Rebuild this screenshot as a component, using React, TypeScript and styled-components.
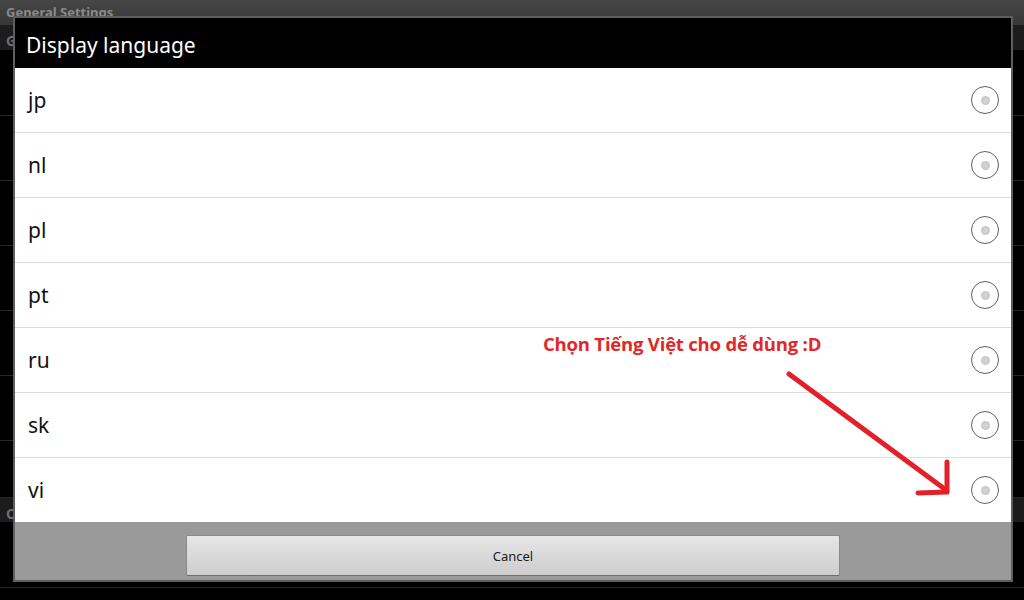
import React from "react";
import styled, { createGlobalStyle } from "styled-components";

const Global = createGlobalStyle`
  html, body { margin: 0; padding: 0; background: #000; }
  body { font-family: "Noto Sans", "Open Sans", sans-serif; }
  * { box-sizing: border-box; }
`;

const Page = styled.div`
  position: relative;
  width: 1024px;
  height: 600px;
  overflow: hidden;
  background: #000;
  display: flex;
  flex-direction: column;
`;

const TopBar = styled.div`
  height: 25px;
  flex: none;
  background: linear-gradient(#474747, #363636);
  color: #8a8a8a;
  font: bold 13px "Noto Sans", sans-serif;
  padding: 3px 0 0 6px;
`;

const SubHead = styled.div<{ $h: number }>`
  height: ${(p) => p.$h}px;
  flex: none;
  background: #1c1c1c;
  color: #6e6e6e;
  font: bold 14px "Noto Sans", sans-serif;
  padding: 6px 0 0 6px;
`;

const BgRow = styled.div<{ $h: number }>`
  height: ${(p) => p.$h}px;
  flex: none;
  border-bottom: 1px solid #262626;
  color: #7a7a7a;
  font: 13px "Noto Sans", sans-serif;
  padding: 2px 0 0 16px;
`;

const Dialog = styled.div`
  position: absolute;
  top: 16px;
  left: 13px;
  width: 1000px;
  height: 566px;
  border: 2px solid #5e5e5e;
  display: flex;
  flex-direction: column;
  background: #000;
`;

const TitleBar = styled.div`
  height: 50px;
  flex: none;
  background: #000;
  color: #fff;
  font: 21px "Noto Sans", "Open Sans", sans-serif;
  padding: 4px 0 0 11px;
  display: flex;
  align-items: center;
`;

const List = styled.div`
  flex: none;
  height: 454px;
  background: #fff;
  display: flex;
  flex-direction: column;
`;

const Row = styled.div<{ $last?: boolean }>`
  height: ${(p) => (p.$last ? 64 : 65)}px;
  flex: none;
  display: flex;
  align-items: center;
  justify-content: space-between;
  padding: 0 12px 0 13px;
  border-bottom: ${(p) => (p.$last ? "none" : "1px solid #dcdcdc")};
  color: #111;
  font: 21px "Noto Sans", "Open Sans", sans-serif;
`;

const Radio = styled.span`
  width: 28px;
  height: 28px;
  border-radius: 50%;
  border: 1.8px solid #606060;
  display: flex;
  align-items: center;
  justify-content: center;
  &::after {
    content: "";
    width: 9px;
    height: 9px;
    border-radius: 50%;
    background: radial-gradient(#d6d6d6, #c2c2c2);
  }
`;

const Footer = styled.div`
  flex: 1;
  background: #9a9a9a;
  display: flex;
  justify-content: center;
  padding-top: 13px;
`;

const Button = styled.div`
  width: 654px;
  height: 41px;
  background: linear-gradient(#e6e6e6, #cdcdcd);
  border: 1px solid #8a8a8a;
  border-bottom-color: #6e6e6e;
  border-radius: 2px;
  display: flex;
  align-items: center;
  justify-content: center;
  color: #1a1a1a;
  font: 13px "Noto Sans", "Open Sans", sans-serif;
`;

const Note = styled.div`
  position: absolute;
  left: 543px;
  top: 331px;
  color: #e02828;
  font: bold 18.5px "Open Sans", "Liberation Sans", sans-serif;
  letter-spacing: -0.2px;
  white-space: nowrap;
`;

const Overlay = styled.svg`
  position: absolute;
  left: 0;
  top: 0;
  pointer-events: none;
`;

const langs = ["jp", "nl", "pl", "pt", "ru", "sk", "vi"];

export default function App() {
  return (
    <>
      <Global />
      <Page>
        <TopBar>General Settings</TopBar>
        <SubHead $h={25}>Global app settings</SubHead>
        <BgRow $h={66} />
        <BgRow $h={65} />
        <BgRow $h={65} />
        <BgRow $h={65} />
        <BgRow $h={65} />
        <BgRow $h={65} />
        <BgRow $h={57} />
        <SubHead $h={24}>OpenSubtitles</SubHead>
        <BgRow $h={66}>Needed for OpenSubtitles.org translations</BgRow>
        <Dialog>
          <TitleBar>Display language</TitleBar>
          <List>
            {langs.map((l, i) => (
              <Row key={l} $last={i === langs.length - 1}>
                <span>{l}</span>
                <Radio />
              </Row>
            ))}
          </List>
          <Footer>
            <Button>Cancel</Button>
          </Footer>
        </Dialog>
        <Note>Chọn Tiếng Việt cho dễ dùng :D</Note>
        <Overlay width="1024" height="600" viewBox="0 0 1024 600">
          <g stroke="#e3202a" strokeWidth="5" strokeLinecap="round" fill="none">
            <line x1="789" y1="374" x2="946" y2="490" />
            <line x1="947" y1="462" x2="947" y2="491" />
            <line x1="918" y1="493" x2="947" y2="492" />
          </g>
        </Overlay>
      </Page>
    </>
  );
}
